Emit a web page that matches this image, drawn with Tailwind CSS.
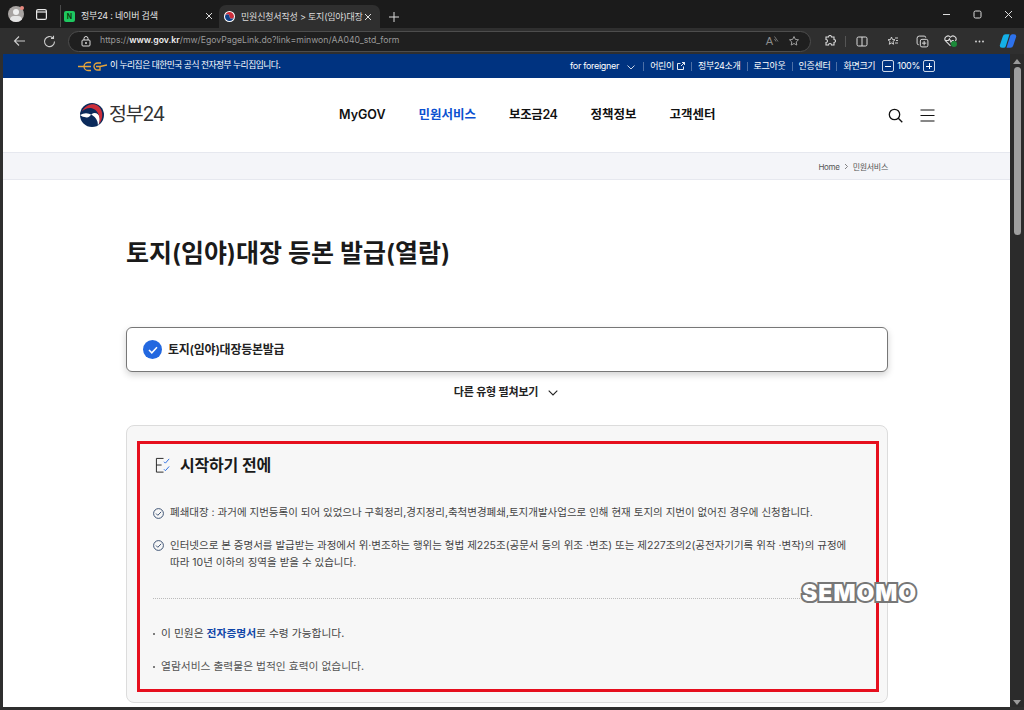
<!DOCTYPE html>
<html lang="ko">
<head>
    <meta charset="UTF-8">
    <title>민원신청서작성 > 토지(임야)대장 등본 발급(열람)</title>
    <script src="https://cdn.jsdelivr.net/npm/@tailwindcss/browser@4"></script>
</head>
<body class="bg-[#1b1b1b] font-['Inter','Noto_Sans_CJK_KR',sans-serif] overflow-hidden">
<div class="relative w-[1024px] h-[710px] overflow-hidden flex flex-col">

    <!-- tab strip -->
    <div class="h-[28px] flex items-end shrink-0 text-[#e6e6e6] text-[9px]">
        <div class="w-[60px] h-[28px] flex items-center pl-[8px] gap-[12px]">
            <div class="relative w-[16px] h-[16px]">
                <div class="w-[16px] h-[16px] rounded-full bg-[#a8a4a2] overflow-hidden relative">
                    <div class="absolute left-[5px] top-[3px] w-[6px] h-[6px] rounded-full bg-[#eee]"></div>
                    <div class="absolute left-[2px] top-[10px] w-[12px] h-[8px] rounded-full bg-[#e4e4e4]"></div>
                </div>
                <div class="absolute right-0 top-0 w-[4px] h-[4px] rounded-full bg-[#e88a80]"></div>
            </div>
            <svg width="11" height="11" viewBox="0 0 11 11" fill="none" stroke="#e8e8e8" stroke-width="1.2"><rect x="0.6" y="0.6" width="9.8" height="9.8" rx="1.5"/><path d="M0.6 3h9.8"/></svg>
        </div>
        <div class="w-[159px] h-[22px] mb-[1px] flex items-center pl-[3px] pr-[6px] border-l border-[#4a4a4a]">
            <div class="w-[11px] h-[11px] bg-[#1ec860] rounded-[2px] flex items-center justify-center text-[7px] font-bold text-[#0c3a0c] leading-none">N</div>
            <span class="ml-[6px] tracking-[-0.2px]">정부24 : 네이버 검색</span>
            <svg class="ml-auto" width="8" height="8" viewBox="0 0 8 8" stroke="#ddd" stroke-width="1"><path d="M1 1l6 6M7 1l-6 6"/></svg>
        </div>
        <div class="w-[161px] h-[23px] bg-[#2f2f2f] rounded-t-[7px] flex items-center pl-[5px] pr-[8px]">
            <svg width="11" height="11" viewBox="0 0 22 22"><circle cx="11" cy="11" r="11" fill="#fff"/><path d="M2 11a9 9 0 0 1 18 0a4.500 4.500 0 0 1-9 0a4.500 4.500 0 0 0-9 0z" fill="#cd2e3a"/><path d="M2 11a9 9 0 0 0 18 0a4.500 4.500 0 0 1-9 0a4.500 4.500 0 0 0-9 0z" fill="#0f3f86"/></svg>
            <span class="ml-[6px] whitespace-nowrap tracking-[-0.2px] text-[#dcdcdc]">민원신청서작성 &gt; 토지(임야)대장</span>
            <svg class="ml-auto" width="8" height="8" viewBox="0 0 8 8" stroke="#ddd" stroke-width="1"><path d="M1 1l6 6M7 1l-6 6"/></svg>
        </div>
        <div class="w-[28px] h-[22px] flex items-center justify-center">
            <svg width="10" height="10" viewBox="0 0 10 10" stroke="#ddd" stroke-width="1"><path d="M5 0v10M0 5h10"/></svg>
        </div>
        <div class="ml-auto h-[27px] flex items-center gap-[22px] pr-[11px]">
            <svg width="9" height="9" viewBox="0 0 9 9" stroke="#ddd" stroke-width="1"><path d="M1 4.500h7"/></svg>
            <svg width="9" height="9" viewBox="0 0 9 9" fill="none" stroke="#ddd" stroke-width="1"><rect x="1" y="1" width="7" height="7" rx="1.500"/></svg>
            <svg width="9" height="9" viewBox="0 0 9 9" stroke="#ddd" stroke-width="1"><path d="M1 1l7 7M8 1l-7 7"/></svg>
        </div>
    </div>

    <!-- address bar -->
    <div class="h-[26px] bg-[#2f2f2f] flex items-center shrink-0">
        <div class="w-[68px] flex items-center pl-[13px] gap-[17px]">
            <svg width="13" height="12" viewBox="0 0 13 12" fill="none" stroke="#ccc" stroke-width="1.1"><path d="M12 6H1.500M6 1.500L1.500 6 6 10.500"/></svg>
            <svg width="13" height="13" viewBox="0 0 13 13" fill="none" stroke="#ccc" stroke-width="1.1"><path d="M11.500 6.500a5 5 0 1 1-1.500-3.500M10.500 0.800v2.600H8"/></svg>
        </div>
        <div class="w-[743px] h-[21px] rounded-full bg-[#1f1f1f] border border-[#4d4d4d] flex items-center pl-[12px] pr-[10px] text-[8.700px] text-[#9a9a9a]">
            <svg width="10" height="11" viewBox="0 0 10 11" fill="none" stroke="#ddd" stroke-width="1"><rect x="1" y="4" width="8" height="6" rx="1"/><path d="M3 4V2.500a2 2 0 0 1 4 0V4"/><circle cx="5" cy="7" r="0.600" fill="#ddd"/></svg>
            <span class="ml-[9px] whitespace-nowrap">https://<b class="text-[#f0f0f0] font-semibold">www.gov.kr</b>/mw/EgovPageLink.do?link=minwon/AA040_std_form</span>
            <span class="ml-auto relative text-[11px] leading-none text-[#8c8c8c] font-['Liberation_Sans',sans-serif]">A<svg class="absolute left-[8px] top-0" width="5" height="6" viewBox="0 0 5 6" fill="none" stroke="#8c8c8c" stroke-width="0.800"><path d="M0.500 0.500l3.500 5M0.500 3l1.500 2.500"/></svg></span>
            <svg class="ml-[15px]" width="12" height="12" viewBox="0 0 24 24" fill="none" stroke="#aaa" stroke-width="1.800"><path d="M12 3l2.700 5.800 6.300.8-4.600 4.300 1.200 6.200L12 17l-5.600 3.100 1.200-6.200L3 9.600l6.300-.8z"/></svg>
        </div>
        <div class="flex-1 flex items-center pl-[13px]">
            <svg width="12" height="12" viewBox="0 0 24 24" fill="none" stroke="#ddd" stroke-width="2.200"><path d="M9 4a3 3 0 0 1 6 0h5v5a3 3 0 0 1 0 6v5h-5a3 3 0 0 0-6 0H4v-5a3 3 0 0 0 0-6V4z"/></svg>
            <span class="ml-[9px] w-px h-[11px] bg-[#555]"></span>
            <svg class="ml-[10px]" width="12" height="11" viewBox="0 0 12 11" fill="none" stroke="#ddd" stroke-width="1"><rect x="1" y="1" width="10" height="9" rx="1.500"/><path d="M6 1v9"/></svg>
            <svg class="ml-[19px]" width="12" height="12" viewBox="0 0 24 24" fill="none" stroke="#ddd" stroke-width="1.800"><path d="M9 4l2 5 5 .5-4 3.500 1.200 5.500L9 16l-4.500 2.500L6 13 2 9.500 7 9zM16 6h6M18 11h4M16 16h6"/></svg>
            <svg class="ml-[17px]" width="13" height="13" viewBox="0 0 24 24" fill="none" stroke="#ddd" stroke-width="1.800"><rect x="8" y="8" width="14" height="14" rx="3"/><path d="M15 11v8M11 15h8M5 18a3 3 0 0 1-3-3V6a4 4 0 0 1 4-4h9a3 3 0 0 1 3 3"/></svg>
            <div class="relative ml-[15px] w-[13px] h-[12px]">
                <svg width="13" height="12" viewBox="0 0 24 22" fill="none" stroke="#ddd" stroke-width="2"><path d="M12 20L3 11a5.500 5.500 0 0 1 9-7 5.500 5.500 0 0 1 9 7M3 10h5l2-3 3 6 2-3h3"/></svg>
                <div class="absolute right-0 bottom-0 w-[6px] h-[6px] rounded-full bg-[#1c8a3a]"></div>
            </div>
            <svg class="ml-[18px]" width="9" height="3" viewBox="0 0 9 3" fill="#ddd"><circle cx="1" cy="1.500" r="0.900"/><circle cx="4.500" cy="1.500" r="0.900"/><circle cx="8" cy="1.500" r="0.900"/></svg>
            <svg class="ml-[15px]" width="18" height="18" viewBox="0 0 24 24"><path d="M9 3h5l-5 16a3 3 0 0 1-3 2H4a3 3 0 0 1-3-3l4-12a4 4 0 0 1 4-3z" fill="#14b0e8"/><path d="M15 21h-5l5-16a3 3 0 0 1 3-2h2a3 3 0 0 1 3 3l-4 12a4 4 0 0 1-4 3z" fill="#2d72ec"/></svg>
        </div>
    </div>

    <!-- page + scrollbar -->
    <div class="flex-1 flex pl-[3px] pb-[3px] bg-[#2f2f2f] min-h-0">
        <div class="w-[1007px] bg-white overflow-hidden flex flex-col">
            <div class="h-[24px] shrink-0 bg-[#003380] text-white text-[9px] flex items-center pl-[75px] pr-[75px] tracking-[-0.3px]">
                <svg width="29" height="11" viewBox="0 0 29 11" fill="none" stroke="#e8a53a" stroke-width="1.300"><path d="M0 5.500h13M13 1.500h-3a4 4 0 0 0 0 8h3M23 2h-3.500a3.500 3.500 0 0 0 0 7H22V5.500h-4M22 5.500L29 4"/></svg>
                <span class="ml-[3px] text-[8.750px] tracking-[-0.5px]">이 누리집은 대한민국 공식 전자정부 누리집입니다.</span>
                <div class="ml-auto flex items-center">
                    <span>for foreigner</span>
                    <svg class="ml-[8px] mr-[8px] mt-[2px]" width="8" height="5" viewBox="0 0 8 5" fill="none" stroke="#fff" stroke-width="0.800"><path d="M0.500 0.500L4 4l3.500-3.500"/></svg>
                    <span class="w-px h-[9px] bg-white/30 mr-[6px]"></span>
                    <span>어린이</span>
                    <svg class="ml-[3px]" width="8" height="8" viewBox="0 0 8 8" fill="none" stroke="#fff" stroke-width="0.900"><path d="M6.500 4.500v3h-6v-6h3M4 4l3.500-3.500M5 0.500h2.500V3"/></svg>
                    <span class="w-px h-[9px] bg-white/30 mx-[6px]"></span>
                    <span>정부24소개</span>
                    <span class="w-px h-[9px] bg-white/30 mx-[6px]"></span>
                    <span>로그아웃</span>
                    <span class="w-px h-[9px] bg-white/30 mx-[6px]"></span>
                    <span>인증센터</span>
                    <span class="w-px h-[9px] bg-white/30 mx-[6px]"></span>
                    <span>화면크기</span>
                    <span class="ml-[7px] w-[12px] h-[12px] border border-white/80 rounded-[2px] flex items-center justify-center"><span class="w-[6px] h-px bg-white"></span></span>
                    <span class="mx-[3px]">100%</span>
                    <span class="relative w-[12px] h-[12px] border border-white/80 rounded-[2px] flex items-center justify-center"><span class="w-[6px] h-px bg-white"></span><span class="absolute w-px h-[6px] bg-white"></span></span>
                </div>
            </div>

            <header class="h-[74px] shrink-0 flex items-center pl-[77px] pr-[75px]">
                <svg width="24" height="24" viewBox="0 0 24 24"><circle cx="12" cy="12" r="12" fill="#0b2a5b"/><path d="M0 12A12 12 0 0 1 18 22.400C21.500 17 20 10 14.500 10C10.500 10 10.500 15 6.500 14.500C3.500 14 2 13.500 0 12z" fill="#fff"/><path d="M2 8.500C4 3.500 9.500 0.800 14 1.200C21.500 2.600 25.500 12 19 21.500C21 14 18 6.800 12 5.200C8 4.400 4.500 6 2 8.500z" fill="#cd2e3a"/></svg>
                <span class="ml-[5px] text-[19.500px] font-normal text-[#333] tracking-[-1.200px] leading-none">정부24</span>
                <nav class="absolute left-[339px] flex items-center gap-[33px] text-[12.500px] font-semibold text-[#111] mt-[1px]">
                    <span>MyGOV</span>
                    <span class="text-[#0b50d0]">민원서비스</span>
                    <span class="tracking-[-0.4px]">보조금24</span>
                    <span>정책정보</span>
                    <span>고객센터</span>
                </nav>
                <div class="ml-auto flex items-center gap-[17px]">
                    <svg width="15" height="15" viewBox="0 0 15 15" fill="none" stroke="#111" stroke-width="1.300"><circle cx="6.500" cy="6.500" r="5.200"/><path d="M10.300 10.300L14.300 14.300"/></svg>
                    <svg width="15" height="13" viewBox="0 0 15 13" stroke="#111" stroke-width="1.200"><path d="M0.500 1h14M0.500 6.500h14M0.500 12h14"/></svg>
                </div>
            </header>

            <div class="h-[28px] shrink-0 bg-[#f4f5f9] border-y border-[#e6e8ef] flex items-center justify-end pr-[122px] pt-[1px] text-[8px] text-[#555] tracking-[-0.3px]">
                <span>Home</span>
                <svg class="mx-[4px]" width="5" height="7" viewBox="0 0 5 7" fill="none" stroke="#666" stroke-width="0.800"><path d="M1 1l2.500 2.500L1 6"/></svg>
                <span>민원서비스</span>
            </div>

            <main class="w-[762px] ml-[123px]">
                <h1 class="mt-[54px] text-[25px] leading-[38px] font-semibold text-[#1a1a1a] tracking-[-0.1px]">토지(임야)대장 등본 발급(열람)</h1>

                <div class="mt-[55px] h-[45px] rounded-[6px] border border-[#777] bg-white shadow-[0_3px_7px_rgba(0,0,0,0.18)] flex items-center pl-[16px]">
                    <span class="w-[19px] h-[19px] rounded-full bg-[#2368e0] flex items-center justify-center">
                        <svg width="10" height="8" viewBox="0 0 10 8" fill="none" stroke="#fff" stroke-width="1.500"><path d="M1 4l2.800 2.800L9 1.200"/></svg>
                    </span>
                    <span class="ml-[6px] text-[12px] font-semibold text-[#222] tracking-[-0.25px]">토지(임야)대장등본발급</span>
                </div>

                <div class="mt-[13px] h-[15px] flex items-center justify-center gap-[10px] pr-[2px] text-[11px] font-semibold text-[#222] tracking-[-0.2px]">
                    <span>다른 유형 펼쳐보기</span>
                    <svg width="10" height="6" viewBox="0 0 10 6" fill="none" stroke="#222" stroke-width="1.100"><path d="M0.700 0.700L5 5l4.300-4.300"/></svg>
                </div>

                <section class="mt-[25px] h-[278px] rounded-[8px] border border-[#dcdcdc] bg-[#f7f7f7] pl-[28px] pr-[29px] pt-[1px] text-[10.500px] text-[#444]">
                    <div class="mt-[26px] flex items-center h-[24px]">
                        <svg width="17" height="17" viewBox="0 0 18 17" fill="none" stroke="#222" stroke-width="1"><path d="M9 1H1.500v14.500H9M1.500 8H7"/><path d="M9.500 4.500l1.500 1.500 4-4.500M9.500 12.500l1.500 1.500 4-4.500" stroke="#2368e0"/></svg>
                        <h2 class="ml-[8px] text-[16px] font-semibold text-[#1a1a1a] tracking-[-0.2px]">시작하기 전에</h2>
                    </div>
                    <div class="mt-[28px] -ml-[2px] flex items-center h-[16px]">
                        <svg width="11" height="11" viewBox="0 0 11 11" fill="none" stroke="#2c4468" stroke-width="0.900"><circle cx="5.500" cy="5.500" r="4.900"/><path d="M3 5.500l1.800 1.800L8.200 3.800"/></svg>
                        <p class="ml-[6px] whitespace-nowrap">폐쇄대장 : 과거에 지번등록이 되어 있었으나 구획정리,경지정리,축척변경폐쇄,토지개발사업으로 인해 현재 토지의 지번이 없어진 경우에 신청합니다.</p>
                    </div>
                    <div class="mt-[16px] -ml-[2px] flex items-start">
                        <svg class="mt-[3px] shrink-0" width="11" height="11" viewBox="0 0 11 11" fill="none" stroke="#2c4468" stroke-width="0.900"><circle cx="5.500" cy="5.500" r="4.900"/><path d="M3 5.500l1.800 1.800L8.200 3.800"/></svg>
                        <p class="ml-[6px] leading-[17px]">인터넷으로 본 증명서를 발급받는 과정에서 위·변조하는 행위는 형법 제225조(공문서 등의 위조 ·변조) 또는 제227조의2(공전자기기록 위작 ·변작)의 규정에<br>따라 10년 이하의 징역을 받을 수 있습니다.</p>
                    </div>
                    <div class="mt-[27px] -ml-[2px] border-t border-dotted border-[#bbb]"></div>
                    <div class="mt-[27px] -ml-[2px] h-[16px] flex items-center text-[10.750px]"><span class="w-[2px] h-[2px] mr-[6px] bg-[#555] rounded-full"></span><p>이 민원은 <b class="font-semibold text-[#0f46a8]">전자증명서</b>로 수령 가능합니다.</p></div>
                    <div class="mt-[17px] -ml-[2px] h-[16px] flex items-center text-[10.750px]"><span class="w-[2px] h-[2px] mr-[6px] bg-[#555] rounded-full"></span><p class="text-[#555]">열람서비스 출력물은 법적인 효력이 없습니다.</p></div>
                </section>
            </main>
        </div>

        <!-- scrollbar -->
        <div class="w-[14px] bg-[#2b2b2b] flex flex-col items-center pt-[5px] pb-[2px]">
            <div class="w-0 h-0 border-x-[4px] border-x-transparent border-b-[5px] border-b-[#9a9a9a]"></div>
            <div class="mt-[3px] w-[7px] h-[168px] rounded-full bg-[#9f9f9f]"></div>
            <div class="mt-auto w-0 h-0 border-x-[4px] border-x-transparent border-t-[5px] border-t-[#9a9a9a]"></div>
        </div>
    </div>

    <!-- red highlight from the screenshot -->
    <div class="absolute left-[137px] top-[441px] w-[742px] h-[251px] border-[3px] border-[#e60f1e] pointer-events-none"></div>
    <!-- watermark -->
    <div class="absolute left-[802px] top-[580px] text-[23px] leading-[27px] font-black tracking-[1px] text-white [-webkit-text-stroke:4px_#777] [paint-order:stroke_fill] font-['Inter',sans-serif]">SEMOMO</div>
</div>
</body>
</html>
